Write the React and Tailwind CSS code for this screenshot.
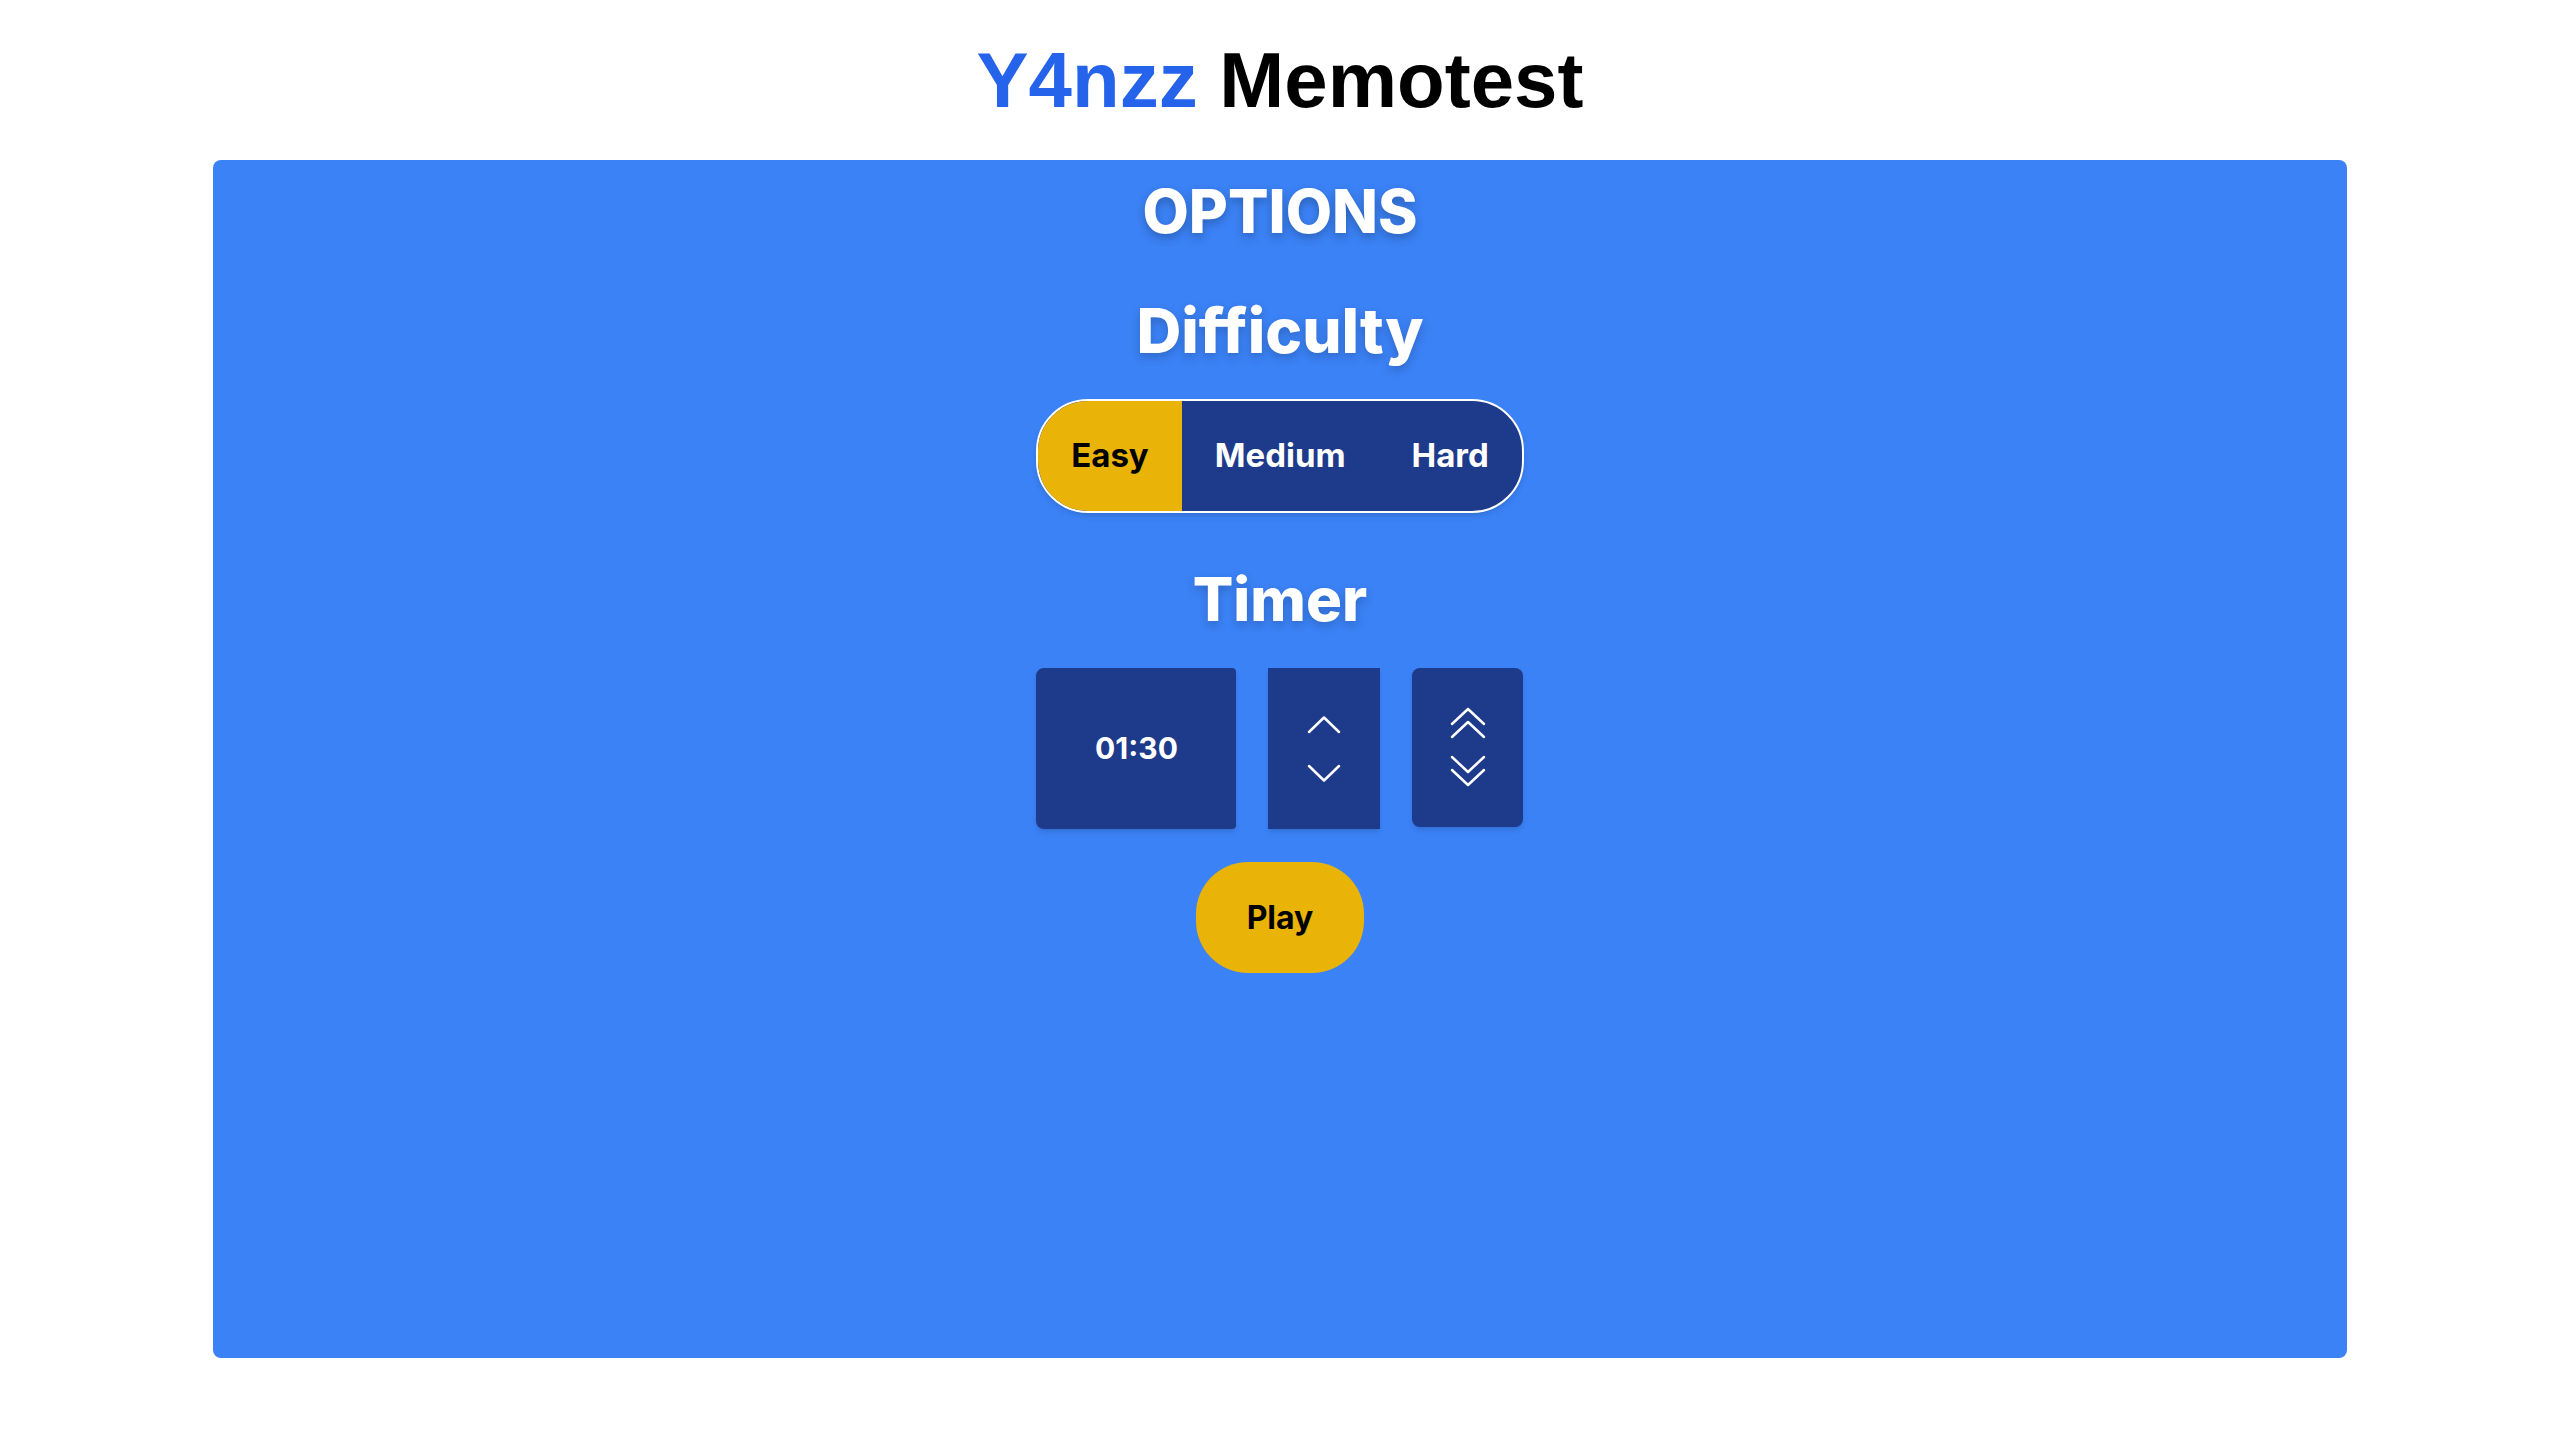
import React, { useState } from "react";

const font = { fontFamily: "Inter, 'Noto Sans', sans-serif" };

const DoubleChevronPair = () => (
    <svg width="36" height="84" viewBox="0 0 36 84" fill="none" stroke="white" strokeWidth="2.5" strokeLinecap="round" strokeLinejoin="round">
        <path d="M2 18 L18 3 L34 18" />
        <path d="M2 31 L18 16 L34 31" />
        <path d="M2 51 L18 66 L34 51" />
        <path d="M2 64 L18 79 L34 64" />
    </svg>
);

export default function App() {
    const [difficulty, setDifficulty] = useState("Easy");
    const [seconds, setSeconds] = useState(90);

    const fmt = (s) => {
        const m = String(Math.floor(s / 60)).padStart(2, "0");
        const r = String(s % 60).padStart(2, "0");
        return `${m}:${r}`;
    };

    return (
        <div className="min-h-screen bg-white flex flex-col items-center" style={font}>
            {/* Title */}
            <h1
                className="mt-[41px] text-[78px] leading-none font-bold"
                style={{ fontFamily: "'Liberation Sans', Arial, sans-serif" }}
            >
                <span className="text-[#2563eb]">Y4nzz</span> <span className="text-black">Memotest</span>
            </h1>

            {/* Options panel */}
            <div className="mt-[41px] w-5/6 h-[1198px] bg-[#3b82f6] rounded-lg flex flex-col items-center">
                <h2 className="mt-[21px] text-[60px] leading-none font-extrabold text-white [text-shadow:0_4px_10px_rgba(0,0,0,0.25)]">
                    OPTIONS
                </h2>

                <h3 className="mt-[59px] text-[62px] leading-none font-extrabold text-white [text-shadow:0_4px_10px_rgba(0,0,0,0.2)]">
                    Difficulty
                </h3>

                <div className="mt-[37px] h-[114px] flex rounded-[52px] border-2 border-white overflow-hidden bg-[#1e3a8a] shadow-md">
                    {["Easy", "Medium", "Hard"].map((d) => (
                        <div
                            key={d}
                            onClick={() => setDifficulty(d)}
                            className={`cursor-pointer flex items-center px-[33px] text-[33px] font-bold ${
                                difficulty === d ? "bg-[#eab308] text-black" : "text-white"
                            }`}
                        >
                            {d}
                        </div>
                    ))}
                </div>

                <h3 className="mt-[56px] text-[60px] leading-none font-extrabold text-white [text-shadow:0_4px_10px_rgba(0,0,0,0.2)]">
                    Timer
                </h3>

                <div className="mt-[39px] flex gap-8 items-start">
                    <div className="w-[200px] h-[161px] bg-[#1e3a8a] rounded-l-lg rounded-r-sm flex items-center justify-center text-white text-[30px] font-bold shadow-md">
                        {fmt(seconds)}
                    </div>
                    <div className="w-[112px] h-[161px] bg-[#1e3a8a] flex flex-col items-center justify-center gap-[30px] shadow-md">
                        <button onClick={() => setSeconds(seconds + 30)} className="h-[18px]">
                            <svg width="34" height="18" viewBox="0 0 34 18" fill="none" stroke="white" strokeWidth="2.5" strokeLinecap="round" strokeLinejoin="round">
                                <path d="M2 16 L17 1.5 L32 16" />
                            </svg>
                        </button>
                        <button onClick={() => setSeconds(Math.max(30, seconds - 30))} className="h-[18px]">
                            <svg width="34" height="18" viewBox="0 0 34 18" fill="none" stroke="white" strokeWidth="2.5" strokeLinecap="round" strokeLinejoin="round">
                                <path d="M2 2 L17 16.5 L32 2" />
                            </svg>
                        </button>
                    </div>
                    <div className="w-[111px] h-[159px] bg-[#1e3a8a] rounded-lg flex items-center justify-center shadow-md">
                        <DoubleChevronPair />
                    </div>
                </div>

                <button className="mt-[33px] w-[168px] h-[111px] rounded-[52px] bg-[#eab308] text-black text-[32px] font-bold">
                    Play
                </button>
            </div>
        </div>
    );
}
